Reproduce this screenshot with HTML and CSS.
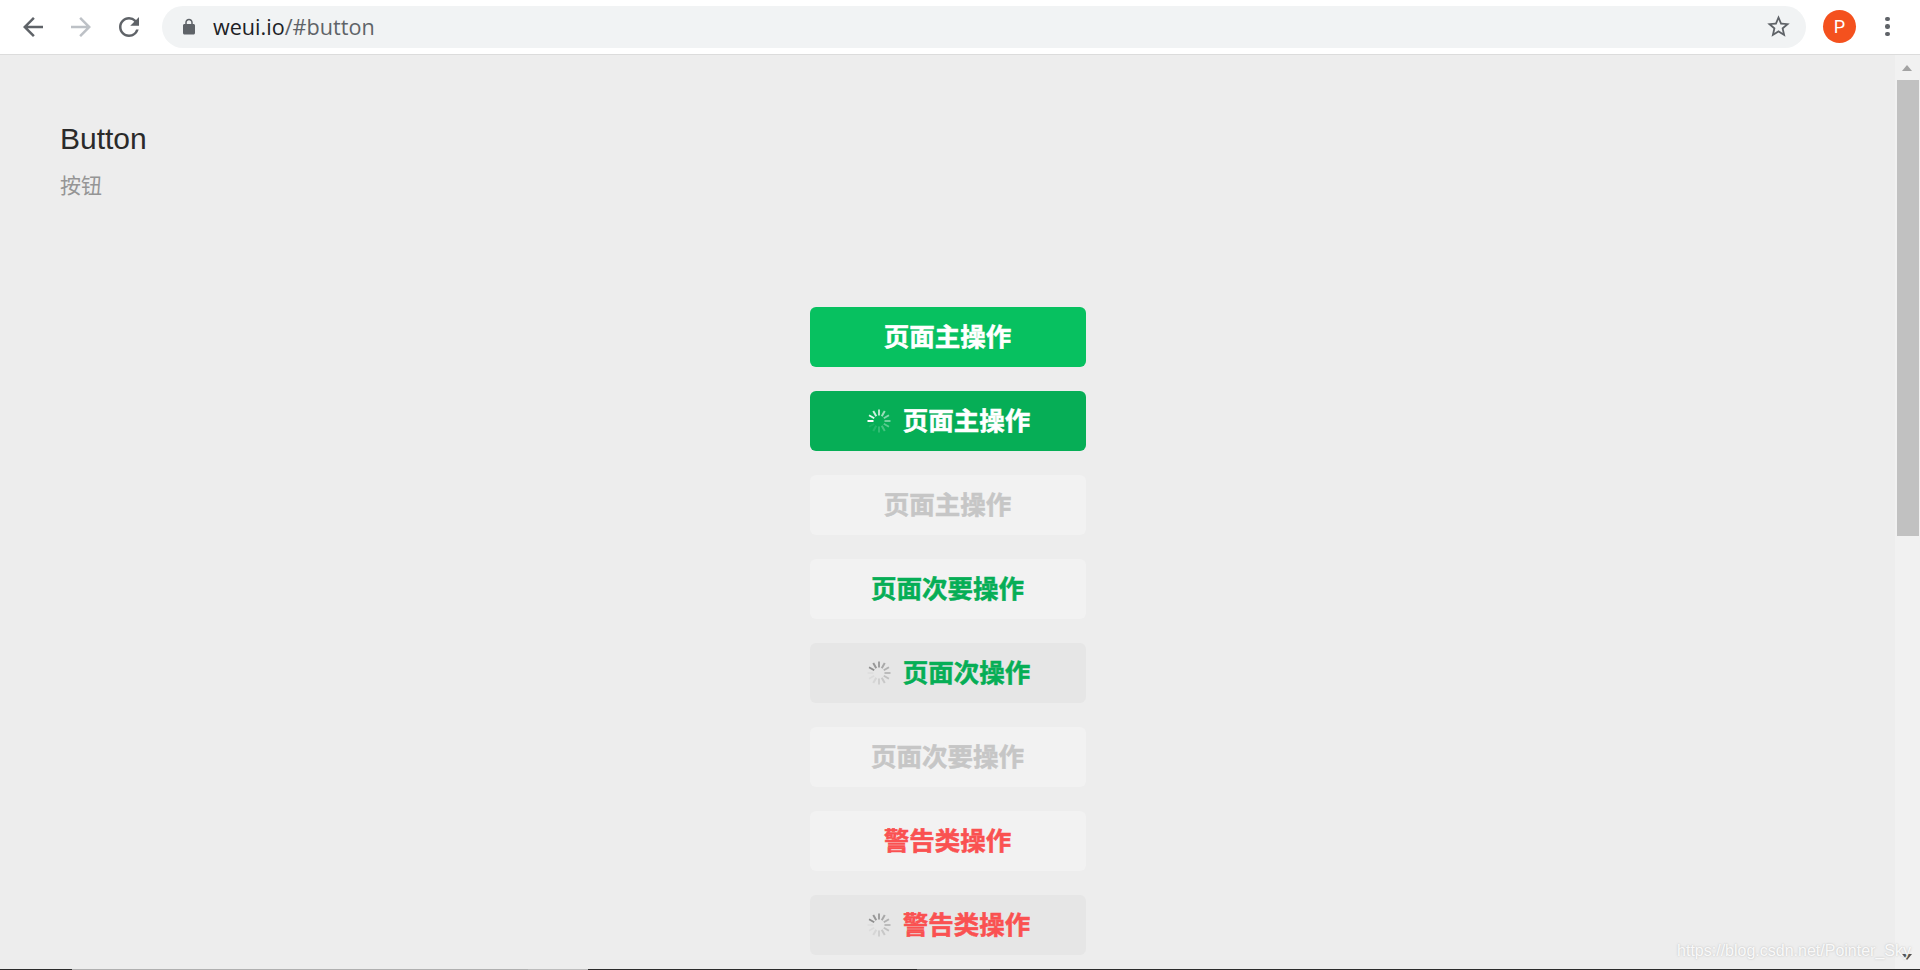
FILE: index.html
```html
<!DOCTYPE html>
<html lang="zh-CN">
<head>
<meta charset="utf-8">
<title>WeUI Button</title>
<link rel="stylesheet" href="styles.css">
</head>
<body>
<svg class="defs" width="0" height="0" aria-hidden="true">
  <symbol id="spinner" viewBox="0 0 24 24">
    <g stroke="currentColor" stroke-width="2" stroke-linecap="butt">
      <line x1="12" y1="0.5" x2="12" y2="6.5" opacity="1"/>
      <line x1="12" y1="0.5" x2="12" y2="6.5" opacity=".9" transform="rotate(30 12 12)"/>
      <line x1="12" y1="0.5" x2="12" y2="6.5" opacity=".8" transform="rotate(60 12 12)"/>
      <line x1="12" y1="0.5" x2="12" y2="6.5" opacity=".7" transform="rotate(90 12 12)"/>
      <line x1="12" y1="0.5" x2="12" y2="6.5" opacity=".6" transform="rotate(120 12 12)"/>
      <line x1="12" y1="0.5" x2="12" y2="6.5" opacity=".5" transform="rotate(150 12 12)"/>
      <line x1="12" y1="0.5" x2="12" y2="6.5" opacity=".42" transform="rotate(180 12 12)"/>
      <line x1="12" y1="0.5" x2="12" y2="6.5" opacity=".34" transform="rotate(210 12 12)"/>
      <line x1="12" y1="0.5" x2="12" y2="6.5" opacity=".26" transform="rotate(240 12 12)"/>
      <line x1="12" y1="0.5" x2="12" y2="6.5" opacity=".18" transform="rotate(270 12 12)"/>
      <line x1="12" y1="0.5" x2="12" y2="6.5" opacity=".12" transform="rotate(300 12 12)"/>
      <line x1="12" y1="0.5" x2="12" y2="6.5" opacity=".08" transform="rotate(330 12 12)"/>
    </g>
  </symbol>
</svg>

<div class="window">
  <header class="toolbar">
    <div class="nav">
      <svg class="nav-icon" viewBox="0 0 24 24"><path d="M20 11H7.83l5.59-5.59L12 4l-8 8 8 8 1.41-1.41L7.83 13H20v-2z"/></svg>
      <svg class="nav-icon nav-icon-off" viewBox="0 0 24 24"><path d="M4 11h12.17l-5.59-5.59L12 4l8 8-8 8-1.41-1.41L16.17 13H4v-2z"/></svg>
      <svg class="nav-icon" viewBox="0 0 24 24"><path d="M17.65 6.35A7.958 7.958 0 0 0 12 4c-4.42 0-7.99 3.58-7.99 8s3.57 8 7.99 8c3.73 0 6.84-2.55 7.73-6h-2.08A5.99 5.99 0 0 1 12 18c-3.31 0-6-2.69-6-6s2.69-6 6-6c1.66 0 3.14.69 4.22 1.78L13 11h7V4l-2.35 2.35z"/></svg>
    </div>
    <div class="omnibox">
      <svg class="lock" viewBox="0 0 24 24"><path d="M18 8h-1V6c0-2.76-2.24-5-5-5S7 3.24 7 6v2H6c-1.1 0-2 .9-2 2v10c0 1.1.9 2 2 2h12c1.1 0 2-.9 2-2V10c0-1.1-.9-2-2-2zM9 6c0-1.66 1.34-3 3-3s3 1.34 3 3v2H9V6z"/></svg>
      <div class="url"><span class="url-host">weui.io</span>/#button</div>
      <svg class="star" viewBox="0 0 24 24"><path d="M22 9.24l-7.19-.62L12 2 9.19 8.63 2 9.24l5.46 4.73L5.82 21 12 17.27 18.18 21l-1.63-7.03L22 9.24zM12 15.4l-3.76 2.27 1-4.28-3.32-2.88 4.38-.38L12 6.1l1.71 4.04 4.38.38-3.32 2.88 1 4.28L12 15.4z"/></svg>
    </div>
    <div class="avatar">P</div>
    <div class="menu"><i></i><i></i><i></i></div>
  </header>

  <div class="viewport">
    <main class="page">
      <h1 class="title">Button</h1>
      <p class="subtitle">按钮</p>
      <div class="buttons">
        <a class="btn btn-primary"><span class="btn-label">页面主操作</span></a>
        <a class="btn btn-primary-loading"><svg class="spin spin-left"><use href="#spinner"/></svg><span class="btn-label">页面主操作</span></a>
        <a class="btn btn-disabled"><span class="btn-label">页面主操作</span></a>
        <a class="btn btn-default"><span class="btn-label">页面次要操作</span></a>
        <a class="btn btn-default-loading"><svg class="spin spin-upper"><use href="#spinner"/></svg><span class="btn-label">页面次操作</span></a>
        <a class="btn btn-disabled"><span class="btn-label">页面次要操作</span></a>
        <a class="btn btn-warn"><span class="btn-label">警告类操作</span></a>
        <a class="btn btn-warn-loading"><svg class="spin spin-upper"><use href="#spinner"/></svg><span class="btn-label">警告类操作</span></a>
      </div>
    </main>
    <div class="scrollbar">
      <div class="arrow-up"></div>
      <div class="thumb"></div>
      <div class="arrow-down"></div>
    </div>
    <div class="watermark">https://blog.csdn.net/Pointer_Sky</div>
  </div>

  <div class="taskbar">
    <span class="seg seg-a"></span>
    <span class="seg seg-b"></span>
    <span class="seg seg-c"></span>
    <span class="seg seg-a seg-d"></span>
    <span class="seg seg-e"></span>
    <span class="seg seg-a seg-f"></span>
  </div>
</div>
</body>
</html>
```

FILE: styles.css
```css
* { box-sizing: border-box; }

html, body {
  margin: 0;
  height: 100%;
  overflow: hidden;
}

body {
  font-family: "Liberation Sans", "Noto Sans CJK SC", sans-serif;
  background: #ededed;
}

.defs { position: absolute; }

.window {
  display: flex;
  flex-direction: column;
  height: 970px;
}

/* Browser toolbar */
.toolbar {
  display: flex;
  align-items: center;
  flex: none;
  height: 55px;
  padding: 0 18px 1px;
  background: #fff;
  border-bottom: 1px solid #dcdcdc;
}

.nav { display: flex; gap: 18px; margin-right: 18px; }

.nav-icon { width: 30px; height: 30px; fill: #5f6368; display: block; }
.nav-icon-off { fill: #bdc1c6; }

.omnibox {
  display: flex;
  align-items: center;
  width: 1644px;
  height: 42px;
  padding: 0 14px 0 18px;
  border-radius: 21px;
  background: #f1f3f4;
}

.lock { width: 18px; height: 18px; fill: #5f6368; flex: none; }

.url {
  flex: 1;
  margin-left: 15px;
  font-family: "Open Sans", "Liberation Sans", sans-serif;
  font-size: 21.6px;
  color: #5f6368;
}

.url-host { color: #202124; }

.star { width: 27px; height: 27px; fill: #5f6368; flex: none; }

.avatar {
  flex: none;
  width: 33px;
  height: 33px;
  margin-left: 17px;
  border-radius: 50%;
  background: #f4511e;
  color: #fff;
  font-family: "Roboto", sans-serif;
  font-size: 18px;
  line-height: 33px;
  text-align: center;
}

.menu {
  display: flex;
  flex-direction: column;
  gap: 3px;
  margin-left: 29px;
}

.menu i {
  display: block;
  width: 4.5px;
  height: 4.5px;
  border-radius: 50%;
  background: #5f6368;
}

/* Page area */
.viewport {
  position: relative;
  display: flex;
  flex: 1;
  min-height: 0;
  overflow: hidden;
}

.page {
  flex: 1;
  padding: 63px 60px 0;
  overflow: hidden;
}

.title {
  margin: 0;
  font-size: 30px;
  font-weight: 400;
  line-height: 42px;
  color: #2a2a2a;
}

.subtitle {
  margin: 11px 0 0;
  font-size: 21px;
  line-height: 30px;
  color: #959595;
}

.buttons {
  display: flex;
  flex-direction: column;
  align-items: center;
  gap: 24px;
  margin: 106px 0 0 1px;
}

.btn {
  display: flex;
  align-items: center;
  justify-content: center;
  flex: none;
  width: 276px;
  height: 60px;
  border-radius: 6px;
  font-size: 25.5px;
  font-weight: 700;
}

.btn-label {
  padding: 0 1px 5px 0;
  -webkit-text-stroke: 0.5px currentColor;
}

.btn-primary { background: #07c160; color: #fff; }
.btn-primary-loading { background: #06ae56; color: #fff; }
.btn-disabled { background: #f2f2f2; color: #c6c6c6; }
.btn-default { background: #f2f2f2; color: #06ae56; }
.btn-default-loading { background: #e6e6e6; color: #06ae56; }
.btn-warn { background: #f2f2f2; color: #fa5151; }
.btn-warn-loading { background: #e6e6e6; color: #fa5151; }

.spin {
  flex: none;
  width: 24px;
  height: 24px;
  margin: 0 12px 0 2px;
  color: #8f8f8f;
}

.btn-primary-loading .spin { color: #fff; }
.spin-left { transform: rotate(-90deg); }
.spin-upper { transform: rotate(-60deg); }

/* Scrollbar */
.scrollbar {
  position: relative;
  flex: none;
  width: 25px;
  background: #f1f1f1;
}

.arrow-up, .arrow-down {
  position: absolute;
  left: 7px;
  width: 0;
  height: 0;
  border-left: 5.5px solid transparent;
  border-right: 5.5px solid transparent;
}

.arrow-up { top: 10px; border-bottom: 6px solid #a3a3a3; }
.arrow-down { bottom: 9px; border-top: 6px solid #505050; }

.thumb {
  position: absolute;
  top: 25px;
  left: 2px;
  right: 1px;
  height: 456px;
  background: #c1c1c1;
}

.watermark {
  position: absolute;
  right: 9px;
  bottom: 6px;
  font-size: 16px;
  line-height: 24px;
  color: rgba(255, 255, 255, 0.9);
  text-shadow: 0 0 2px rgba(150, 150, 150, 0.6);
  white-space: nowrap;
}

/* Sliver of the desktop taskbar under the window */
.taskbar {
  display: flex;
  flex: none;
  height: 1px;
}

.seg { display: block; height: 1px; }
.seg-a { width: 72px; background: #2b2b2b; }
.seg-b { width: 456px; background: #b0b0b0; }
.seg-c { width: 60px; background: #bdbdbd; }
.seg-d { width: 329px; }
.seg-e { width: 73px; background: #6a6a6a; }
.seg-f { flex: 1; }
```
